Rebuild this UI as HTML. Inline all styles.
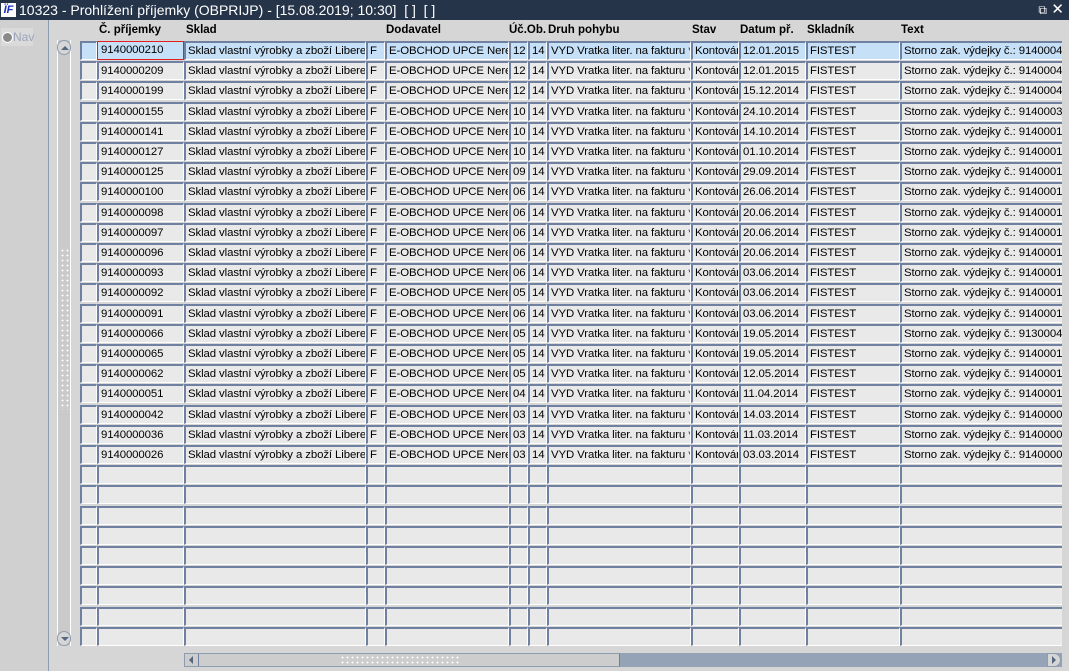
<!DOCTYPE html>
<html><head><meta charset="utf-8">
<style>
*{margin:0;padding:0;box-sizing:border-box}
body{width:1069px;height:671px;overflow:hidden;background:#d6d6d6;font-family:"Liberation Sans",Arial,sans-serif;font-size:12px;color:#000;position:relative}
#title{position:absolute;left:0;top:0;width:1069px;height:20px;background:#263449;color:#fff;font-size:14px;line-height:20px;z-index:5}
#title .t{position:absolute;left:19px;top:0}
#logo{position:absolute;left:1px;top:3px;width:15px;height:14px;background:#fff;color:#1a2fc0;font:bold italic 11px "Liberation Sans",sans-serif;line-height:14px;text-align:center}
#left{position:absolute;left:0;top:20px;width:49px;height:651px;background:#d0d0d0;border-right:1px solid #8e9cb0}
#nav{position:absolute;left:1px;top:8px;width:32px;height:18px;background:#dadada;color:#9aa6b8;font-size:12px;line-height:18px;padding-left:12px}
#nav:before{content:"";position:absolute;left:1px;top:4px;width:9px;height:9px;border-radius:50%;background:#8a8a8a;border:1px solid #fff}
#vs{position:absolute;left:57px;top:40px;width:14px;height:606px;background:#cacaca;border-left:1px solid #fff;border-right:1px solid #fff}
.btn{position:absolute;left:-1px;width:14px;height:15px;border:1px solid #8e9cb0;border-radius:7px;background:#d6d6d6}
#hs{position:absolute;left:184px;top:653px;width:878px;height:14px;background:#94a3b5}
#hthumb{position:absolute;left:0;top:0;width:436px;height:14px;background:#cdcdcd;border:1px solid #8e9cb0;border-right:1px solid #6f80a0}
.dots{position:absolute;background-image:radial-gradient(#fff 0.8px,transparent 1px);background-size:5px 5px}
#grid{position:absolute;left:0;top:20px;width:1062px;height:630px;overflow:hidden}
.h{position:absolute;top:4px;font-weight:bold;font-size:11.5px}
.c{position:absolute;height:19px;background:#e9e9e9;border-top:2px solid #6f80a0;border-left:2px solid #6f80a0;border-bottom:1px solid #fff;border-right:1px solid #fff;line-height:16px;padding-left:2px;white-space:nowrap;overflow:hidden;color:#000;font-size:11.4px;letter-spacing:-0.1px}
.sel{background:#c6e0f8}
.red{border:1px solid #e02020;line-height:17px;padding-left:3px}
</style></head><body>
<div id="title"><div id="logo">ÏF</div><span class="t">10323 - Prohlížení příjemky (OBPRIJP) - [15.08.2019; 10:30]&nbsp; [ ]&nbsp; [ ]</span>
<span style="position:absolute;right:22px;top:0;font-size:12px">⧉</span><span style="position:absolute;right:5px;top:0;font-size:15px">✕</span></div>
<div id="left"><div id="nav">Nav</div></div>
<div id="vs"><div class="btn" style="top:0"><div style="position:absolute;left:3px;top:5px;border:4px solid transparent;border-bottom:4px solid #55667f;border-top:0"></div></div>
<div class="dots" style="left:2px;top:208px;width:10px;height:162px"></div>
<div class="btn" style="bottom:0"><div style="position:absolute;left:3px;top:5px;border:4px solid transparent;border-top:4px solid #55667f;border-bottom:0"></div></div></div>
<div id="hs"><div id="hthumb"><div style="position:absolute;left:1px;top:0;width:13px;height:12px;border-right:1px solid #6f80a0"><div style="position:absolute;left:3px;top:2px;border:4px solid transparent;border-right:4px solid #55667f;border-left:0"></div></div><div class="dots" style="left:155px;top:1px;width:120px;height:11px"></div></div>
<div style="position:absolute;right:1px;top:0;width:14px;height:14px;background:#d6d6d6;border:1px solid #8e9cb0;border-radius:0 7px 7px 0"><div style="position:absolute;left:4px;top:2px;border:4px solid transparent;border-left:4px solid #55667f;border-right:0"></div></div></div>
<div id="grid">
<div class="h" style="left:99px">Č. příjemky</div><div class="h" style="left:186px">Sklad</div><div class="h" style="left:386px">Dodavatel</div><div class="h" style="left:509px">Úč.Ob.</div><div class="h" style="left:548px">Druh pohybu</div><div class="h" style="left:692px">Stav</div><div class="h" style="left:740px">Datum př.</div><div class="h" style="left:807px">Skladník</div><div class="h" style="left:901px">Text</div>
<div id="rows"></div>
</div>
<script>
(function(){
var cols=[[80,17],[97,87],[184,182],[366,19],[385,124],[509,19],[528,19],[547,144],[691,48],[739,67],[806,94],[900,175]];
var d=[["210","12","12.01.2015","91400041"],["209","12","12.01.2015","91400041"],["199","12","15.12.2014","91400040"],["155","10","24.10.2014","91400034"],["141","10","14.10.2014","91400019"],["127","10","01.10.2014","91400019"],["125","09","29.09.2014","91400019"],["100","06","26.06.2014","91400016"],["098","06","20.06.2014","91400016"],["097","06","20.06.2014","91400016"],["096","06","20.06.2014","91400016"],["093","06","03.06.2014","91400016"],["092","05","03.06.2014","91400015"],["091","06","03.06.2014","91400016"],["066","05","19.05.2014","91300047"],["065","05","19.05.2014","91400013"],["062","05","12.05.2014","91400014"],["051","04","11.04.2014","91400013"],["042","03","14.03.2014","91400009"],["036","03","11.03.2014","91400008"],["026","03","03.03.2014","91400006"]];
var h="";
for(var i=0;i<30;i++){var ty=Math.round(21+i*20.2);var r=d[i];
var v=r?["","9140000"+r[0],"Sklad vlastní výrobky a zboží Liberec","F","E-OBCHOD UPCE Neregistrovaný",r[1],"14","VYD Vratka liter. na fakturu *","Kontování",r[2],"FISTEST","Storno zak. výdejky č.: "+r[3]]:["","","","","","","","","","","",""];
for(var j=0;j<cols.length;j++){var cl="c"+(i==0?" sel":"")+(i==0&&j==1?" red":"");
h+='<div class="'+cl+'" style="left:'+cols[j][0]+'px;top:'+ty+'px;width:'+cols[j][1]+'px">'+v[j]+'</div>';}}
document.getElementById("rows").innerHTML=h;
})();
</script>
</body></html>
